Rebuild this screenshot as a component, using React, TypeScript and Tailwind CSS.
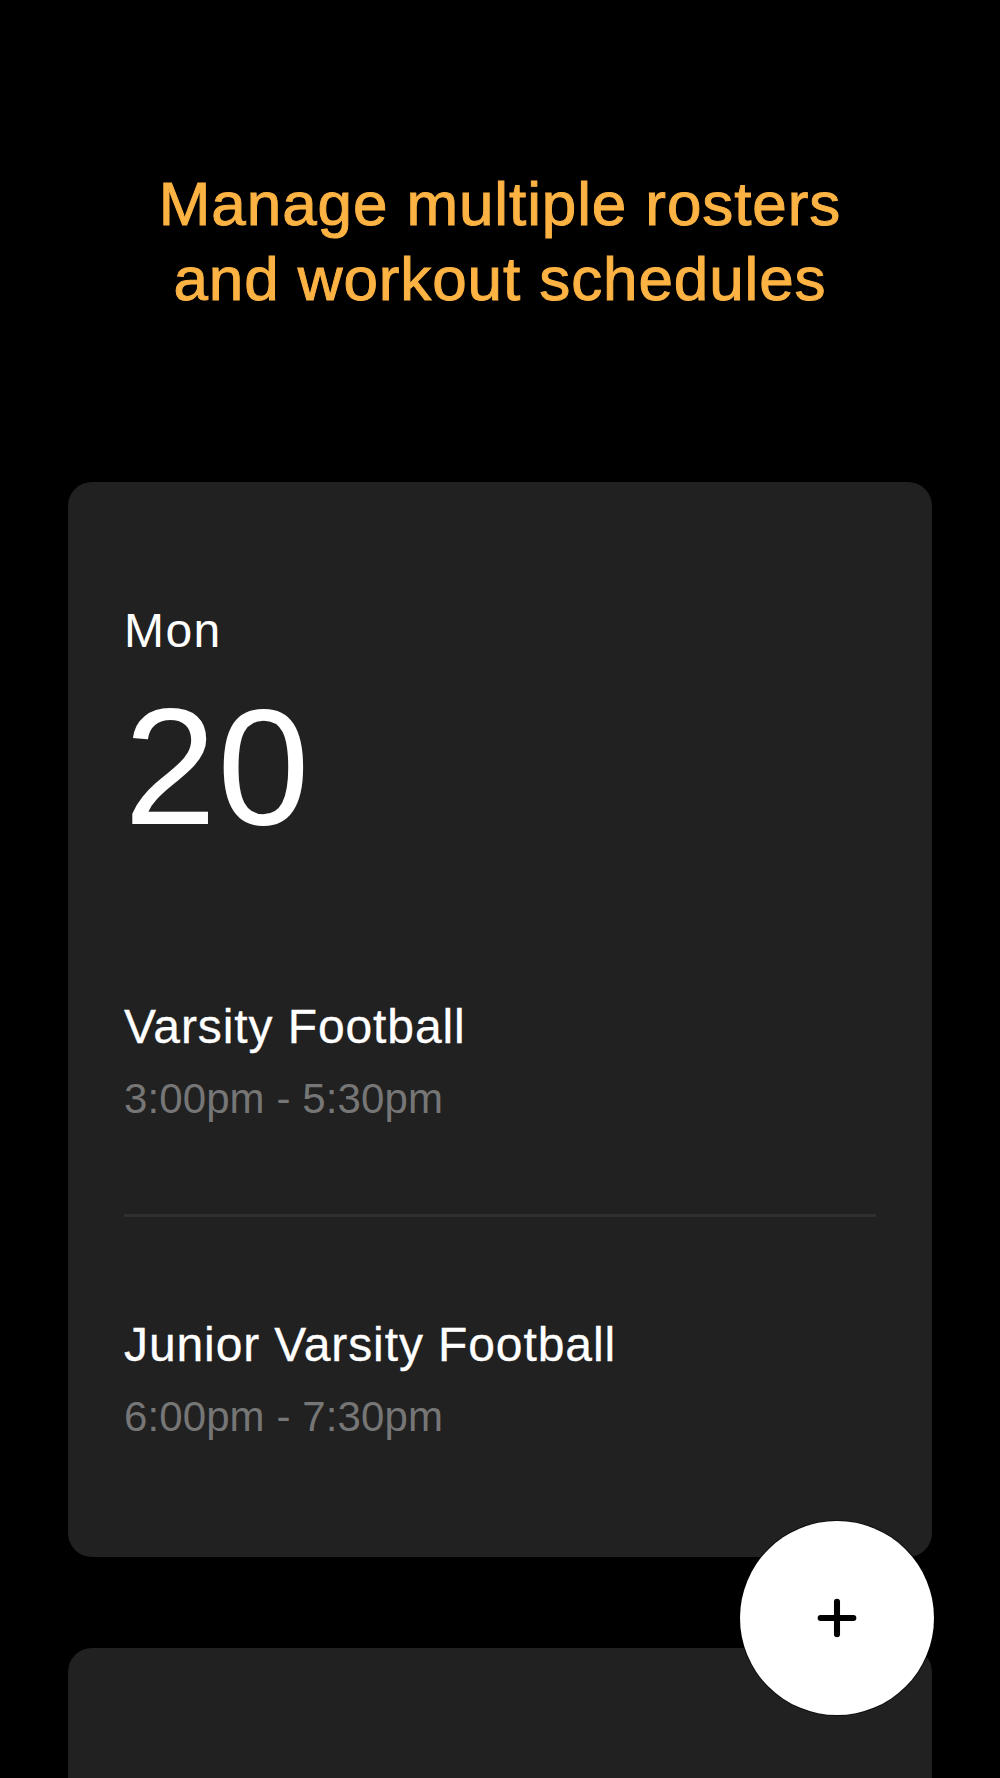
import { Plus } from "lucide-react";

type Session = {
  team: string;
  time: string;
};

const monday: Session[] = [
  { team: "Varsity Football", time: "3:00pm - 5:30pm" },
  { team: "Junior Varsity Football", time: "6:00pm - 7:30pm" },
];

const tuesday: Session[] = [
  { team: "Varsity Football", time: "3:00pm - 5:30pm" },
];

const DayCard = ({
  day,
  date,
  sessions,
}: {
  day: string;
  date: string;
  sessions: Session[];
}) => {
  return (
    <div className="flex w-full flex-col rounded-[24px] bg-[#212121] px-14 pt-[120px] pb-[115px]">
      <p className="text-[48px] leading-[58px] tracking-[1.4px] text-white">
        {day}
      </p>
      <p className="mt-[24px] text-[166px] leading-none tracking-[1px] text-white">
        {date}
      </p>

      <div className="mt-[148px] flex flex-col">
        {sessions.map((session, i) => (
          <div
            key={session.team}
            className={
              i > 0
                ? "mt-[90px] border-t-[3px] border-[#2f2f2f] pt-[99px]"
                : ""
            }
          >
            <p className="text-[48px] leading-[58px] tracking-[0.9px] text-white [-webkit-text-stroke:0.3px_#ffffff]">
              {session.team}
            </p>
            <p className="mt-[18px] text-[42px] leading-[50px] tracking-[0.1px] text-[#767676]">
              {session.time}
            </p>
          </div>
        ))}
      </div>
    </div>
  );
};

export default function App() {
  return (
    <div className="h-[1778px] w-full overflow-hidden bg-black font-['Liberation_Sans',Arial,sans-serif]">
      <h1 className="pt-[166px] text-center text-[62px] leading-[75px] tracking-[0.9px] text-[#fdb343] [-webkit-text-stroke:1px_#fdb343]">
        Manage multiple rosters
        <br />
        and workout schedules
      </h1>

      <div className="mx-[68px] mt-[166px] flex flex-col gap-[91px]">
        <div className="relative">
          <DayCard day="Mon" date="20" sessions={monday} />

          <button
            type="button"
            className="absolute right-[-2px] bottom-[-158px] flex h-[194px] w-[194px] items-center justify-center rounded-full bg-white shadow-[0_0_0_1px_rgba(0,0,0,0.6)]"
          >
            <Plus className="h-[56px] w-[56px] text-black" strokeWidth={2.6} />
          </button>
        </div>

        <DayCard day="Tue" date="21" sessions={tuesday} />
      </div>
    </div>
  );
}
